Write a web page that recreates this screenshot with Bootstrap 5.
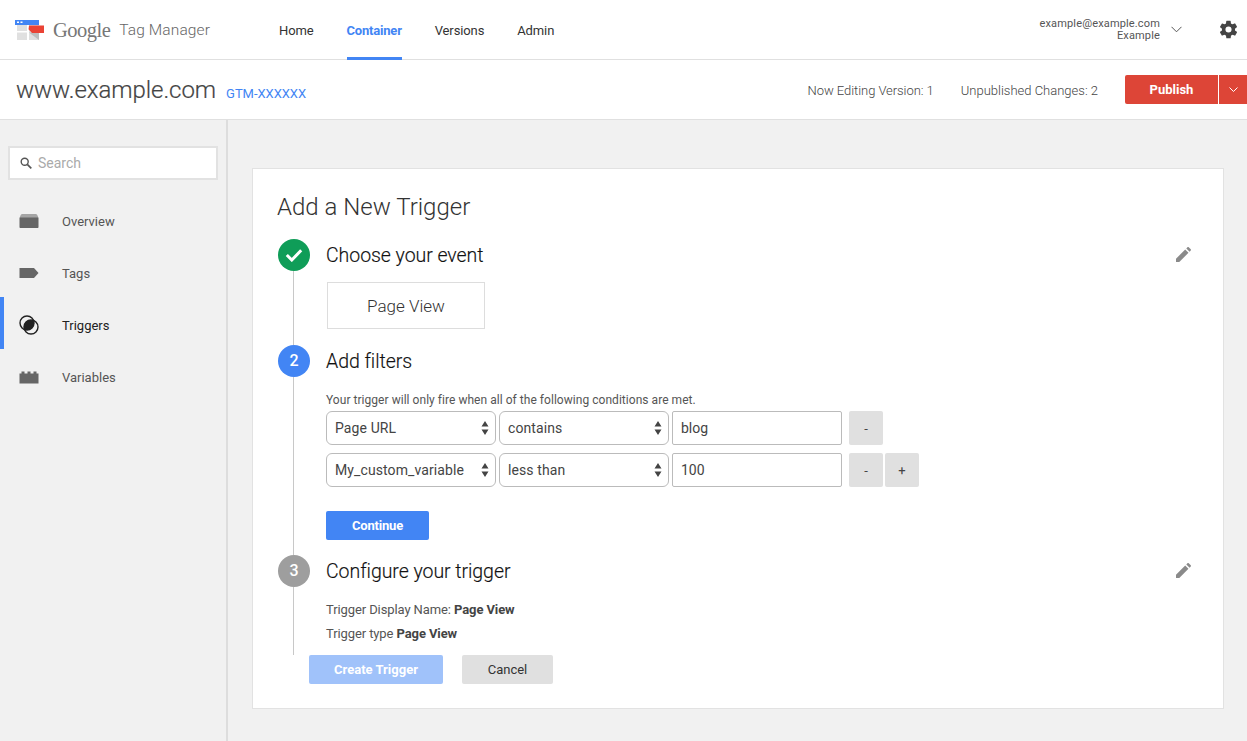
<!DOCTYPE html>
<html lang="en">
<head>
<meta charset="utf-8">
<title>Google Tag Manager</title>
<link href="https://cdn.jsdelivr.net/npm/bootstrap@5.3.0/dist/css/bootstrap.min.css" rel="stylesheet">
<style>
html,body{height:741px;overflow:hidden}
body{font-family:Roboto,"Liberation Sans",sans-serif;background:#f1f1f1;color:#444;font-size:13px}
.topbar{height:60px;background:#fff;border-bottom:1px solid #e0e0e0}
.brand{width:279px;padding-left:15px;gap:8px}
.wordmark{font-family:"Liberation Serif",serif;font-size:20.5px;color:#777;letter-spacing:-.5px;line-height:1;margin-top:2px}
.product{font-size:15.5px;font-weight:300;color:#666;margin-left:1px;letter-spacing:.1px;margin-top:2px}
.tabs{gap:33px;height:59px}
.tablink{display:flex;align-items:center;height:60px;color:#333;text-decoration:none;font-size:13px;letter-spacing:-.12px;border-bottom:3px solid transparent;padding-top:4px}
.tablink.on{color:#4285f4;font-weight:700;border-bottom-color:#4285f4;letter-spacing:-.2px}
.acct{font-size:11px;line-height:12px;color:#555;text-align:right;margin-right:10px;padding-top:1px;letter-spacing:.15px}
.acct-chev{margin-right:36px;margin-left:1px}
.gear{margin-right:8px}
.subbar{height:60px;background:#fff;border-bottom:1px solid #e0e0e0;padding-left:16px}
.site{font-size:24px;color:#444;font-weight:300;line-height:1;letter-spacing:-.05px;-webkit-text-stroke:.2px #444}
.gtm{font-size:13px;color:#4285f4;margin-left:10px;margin-top:9px;text-decoration:none;letter-spacing:-.05px}
.stat{font-size:13px;font-weight:300;color:#444;margin-right:27px;padding-top:2px}
.stat.first{letter-spacing:-.06px}
.pub-main,.pub-caret{height:29px;background:#dd4537;border:0;border-radius:0;color:#fff;font-size:13px;font-weight:700;padding:0;display:flex;align-items:center;justify-content:center}
.pub-main{width:93px;border-radius:2px 0 0 2px}
.pub-caret{width:28px;margin-left:1px}
.shell{height:621px}
.sidebar{width:228px;border-right:2px solid #ddd;padding-top:26px;flex:none}
.searchbox{margin:0 8px 13px 8px;height:34px;border:2px solid #e2e2e2;background:#fff;padding-left:10px;gap:6px;color:#aaa;font-size:14px}
.sideitem{height:52px;padding-left:19px;color:#555;font-size:13px;text-decoration:none;gap:0}
.sideitem svg{width:20px;flex:none;margin-right:23px;margin-top:4px}
.sideitem span{margin-top:6px}
.sideitem.on{color:#222;box-shadow:inset 4px 0 0 #4285f4}
.mainpane{padding:48px 23px 0 24px;flex:1}
.panel{height:541px;background:#fff;border:1px solid #e2e2e2;padding:22px 24px 0 25px;border-radius:0}
.paneltitle{font-size:24px;font-weight:300;color:#333;line-height:32px;margin:0 0 16px -1px}
.step{gap:16px}
.rail{width:32px;flex:none}
.dot{width:32px;height:32px;border-radius:50%;color:#fff;font-size:16px;font-weight:500;flex:none}
.dot.ok{background:#0f9d58}
.dot.cur{background:#4285f4}
.dot.next{background:#9e9e9e}
.stem{width:1px;background:#c8c8c8;flex:1;align-self:flex-start;margin-left:15px}
.stepbody{flex:1}
.steptitle{font-size:19.5px;font-weight:300;color:#111;line-height:32px;padding-top:1px;-webkit-text-stroke:.15px #111;letter-spacing:-.05px}
.s1{height:106px}.s2{height:210px}.s3{height:100px}
.eventbox{width:158px;height:47px;margin:10px 0 0 1px;padding-top:2px;border:1px solid #ddd;font-size:17px;font-weight:300;color:#333}
.hint{font-size:12px;line-height:14px;color:#555;margin-top:15px;margin-bottom:4px;letter-spacing:.04px}
.filter{gap:3px;margin-bottom:8px}
.fld{width:170px;height:34px;font-size:14px;color:#444;border:1px solid #bbb;border-radius:6px;padding:0 8px;box-shadow:none;font-family:inherit;letter-spacing:.1px;background-position:right 6px center;background-size:8px 14px;
background-image:url("data:image/svg+xml,%3Csvg xmlns='http://www.w3.org/2000/svg' viewBox='0 0 8 14'%3E%3Cpath fill='%23444' d='M4 0l3.5 5.500h-7zM4 14L.5 8.500h7z'/%3E%3C/svg%3E")}
.fldtext{width:170px;height:34px;font-size:14px;color:#444;border:1px solid #bbb;border-radius:2px;padding:0 8px;box-shadow:none}
.mini{width:34px;height:34px;background:#e0e0e0;border:0;border-radius:2px;padding:0;color:#444;font-size:13px;line-height:1}
.minis{gap:2px;margin-left:4px}
.go{width:103px;height:29px;background:#4285f4;color:#fff;font-weight:700;font-size:13px;letter-spacing:-.2px;border:0;border-radius:2px;padding:0;margin-top:16px}
.summary{font-size:13px;line-height:24px;color:#555;letter-spacing:-.1px}
.summary b{color:#444;font-weight:700}
.summary.lead-line{margin-top:10px}
.actions{margin-left:31px;gap:19px}
.create{width:134px;height:29px;background:#a0c2fa;color:#fff;font-weight:700;font-size:13px;border:0;border-radius:2px;padding:0}
.cancel{width:91px;height:29px;background:#e0e0e0;color:#333;font-size:13px;border:0;border-radius:2px;padding:0}
.pencil{margin:8px 8px 0 0}
</style>
</head>
<body>
<header class="topbar d-flex align-items-center">
  <div class="brand d-flex align-items-center flex-none">
    <svg width="30" height="22" viewBox="0 0 30 22" aria-hidden="true">
      <rect x="0" y="1" width="24" height="5" fill="#4285f4"/>
      <rect x="2" y="2.500" width="2" height="1.500" fill="#fff"/><rect x="5.500" y="2.500" width="2" height="1.500" fill="#fff"/>
      <rect x="2" y="6" width="22" height="15" fill="#e0e0e0"/>
      <path d="M2 12h10v1.500H2zM12 6v15h2V6z" fill="#fff"/>
      <path d="M14 13.500h10V21z" fill="#bdbdbd"/>
      <path d="M14 6.500h15V14H17l-3.500-3.800z" fill="#ea4335"/>
    </svg>
    <span class="wordmark">Google</span><span class="product">Tag Manager</span>
  </div>
  <nav class="tabs d-flex">
    <a class="tablink" href="#">Home</a>
    <a class="tablink on" href="#">Container</a>
    <a class="tablink" href="#">Versions</a>
    <a class="tablink" href="#">Admin</a>
  </nav>
  <div class="ms-auto d-flex align-items-center">
    <div class="acct">example@example.com<br>Example</div>
    <svg class="acct-chev" width="11" height="7" viewBox="0 0 11 7" aria-hidden="true"><path d="M.5.8l5 5 5-5" fill="none" stroke="#555" stroke-width="1"/></svg>
    <svg class="gear" width="21" height="21" viewBox="0 0 24 24" aria-hidden="true"><path fill="#444" d="M19.400 13c.04-.33.06-.66.06-1s-.02-.67-.06-1l2.100-1.650a.5.5 0 0 0 .12-.64l-2-3.460a.5.5 0 0 0-.6-.22l-2.500 1a7.300 7.300 0 0 0-1.700-1l-.37-2.650A.5.5 0 0 0 14 2h-4a.5.5 0 0 0-.5.42L9.100 5.070a7.600 7.600 0 0 0-1.700 1l-2.480-1a.5.5 0 0 0-.61.22l-2 3.460a.5.5 0 0 0 .12.64L4.550 11a7.900 7.900 0 0 0 0 2l-2.100 1.650a.5.5 0 0 0-.12.64l2 3.460c.12.22.38.3.6.22l2.500-1c.52.4 1.080.73 1.700 1l.37 2.650c.04.24.25.42.5.42h4c.25 0 .46-.18.5-.42l.37-2.650a7.600 7.600 0 0 0 1.700-1l2.480 1c.23.08.49 0 .61-.22l2-3.460a.5.5 0 0 0-.12-.64zM12 15.500a3.500 3.500 0 1 1 0-7 3.500 3.500 0 0 1 0 7z"/></svg>
  </div>
</header>

<div class="subbar d-flex align-items-center">
  <span class="site">www.example.com</span>
  <a class="gtm" href="#">GTM-XXXXXX</a>
  <div class="ms-auto d-flex align-items-center">
    <span class="stat first">Now Editing Version: 1</span>
    <span class="stat">Unpublished Changes: 2</span>
    <button class="btn pub-main" type="button">Publish</button>
    <button class="btn pub-caret" type="button" aria-label="More"><svg width="9" height="5" viewBox="0 0 9 5" aria-hidden="true"><path d="M.5.5l4 4 4-4" fill="none" stroke="#fff"/></svg></button>
  </div>
</div>

<div class="shell d-flex">
  <aside class="sidebar">
    <div class="searchbox d-flex align-items-center">
      <svg width="12" height="12" viewBox="0 0 12 12" aria-hidden="true"><circle cx="4.700" cy="4.700" r="3.500" fill="none" stroke="#555" stroke-width="1.400"/><path d="M7.300 7.300l4 4" stroke="#555" stroke-width="1.700"/></svg>
      <span>Search</span>
    </div>
    <a class="sideitem d-flex align-items-center" href="#">
      <svg height="16" viewBox="0 0 20 16" aria-hidden="true"><path fill="#666" d="M3.500 1h13c1 0 1.600.5 2 1.500L19.500 5H.5l1-2.500C1.900 1.500 2.500 1 3.500 1z" opacity=".55"/><path fill="#666" d="M1.500 4.500h17c.6 0 1 .4 1 1V14c0 .6-.4 1-1 1h-17c-.6 0-1-.4-1-1V5.500c0-.6.4-1 1-1z"/></svg>
      <span>Overview</span>
    </a>
    <a class="sideitem d-flex align-items-center" href="#">
      <svg height="12" viewBox="0 0 20 12" aria-hidden="true"><path fill="#666" d="M.5 1h14.500l4.500 5-4.500 5H.5z"/></svg>
      <span>Tags</span>
    </a>
    <a class="sideitem on d-flex align-items-center" href="#">
      <svg height="20" viewBox="0 0 20 20" aria-hidden="true"><circle cx="8" cy="8" r="7" fill="none" stroke="#222" stroke-width="1.400"/><circle cx="12" cy="12" r="7" fill="none" stroke="#222" stroke-width="1.400"/><path fill="#222" d="M14.530 5.470A7 7 0 0 1 5.470 14.530 7 7 0 0 1 14.530 5.470z"/></svg>
      <span>Triggers</span>
    </a>
    <a class="sideitem d-flex align-items-center" href="#">
      <svg height="13" viewBox="0 0 20 13" aria-hidden="true"><path fill="#666" d="M.5 2.500h2V.5h3v2h3V.5h3v2h3V.5h3v2h2V12.500H.5z"/></svg>
      <span>Variables</span>
    </a>
  </aside>

  <main class="mainpane">
    <section class="panel">
      <h1 class="paneltitle">Add a New Trigger</h1>

      <div class="step s1 d-flex">
        <div class="rail d-flex flex-column align-items-center">
          <div class="dot ok d-flex align-items-center justify-content-center">
            <svg width="18" height="14" viewBox="0 0 18 14" aria-hidden="true"><path d="M1.800 7l5 5L16.200 2.300" fill="none" stroke="#fff" stroke-width="3"/></svg>
          </div>
          <div class="stem"></div>
        </div>
        <div class="stepbody">
          <div class="d-flex justify-content-between">
            <div class="steptitle">Choose your event</div>
            <svg class="pencil" width="15" height="15" viewBox="0 0 16 16" aria-hidden="true"><path fill="#8a8a8a" d="M0 16v-3.500L9.800 2.700l3.500 3.500L3.500 16zM11 1.500L12.200.3c.4-.4 1-.4 1.400 0l2.100 2.100c.4.400.4 1 0 1.400L14.500 5z"/></svg>
          </div>
          <div class="eventbox d-flex align-items-center justify-content-center">Page View</div>
        </div>
      </div>

      <div class="step s2 d-flex">
        <div class="rail d-flex flex-column align-items-center">
          <div class="dot cur d-flex align-items-center justify-content-center">2</div>
          <div class="stem"></div>
        </div>
        <div class="stepbody">
          <div class="steptitle">Add filters</div>
          <div class="hint">Your trigger will only fire when all of the following conditions are met.</div>
          <div class="filter d-flex">
            <select class="form-select fld"><option>Page URL</option></select>
            <select class="form-select fld"><option>contains</option></select>
            <input class="form-control fldtext" type="text" value="blog">
            <div class="minis d-flex"><button class="btn mini" type="button">-</button></div>
          </div>
          <div class="filter d-flex">
            <select class="form-select fld"><option>My_custom_variable</option></select>
            <select class="form-select fld"><option>less than</option></select>
            <input class="form-control fldtext" type="text" value="100">
            <div class="minis d-flex"><button class="btn mini" type="button">-</button><button class="btn mini" type="button">+</button></div>
          </div>
          <button class="btn go" type="button">Continue</button>
        </div>
      </div>

      <div class="step s3 d-flex">
        <div class="rail d-flex flex-column align-items-center">
          <div class="dot next d-flex align-items-center justify-content-center">3</div>
          <div class="stem"></div>
        </div>
        <div class="stepbody">
          <div class="d-flex justify-content-between">
            <div class="steptitle">Configure your trigger</div>
            <svg class="pencil" width="15" height="15" viewBox="0 0 16 16" aria-hidden="true"><path fill="#8a8a8a" d="M0 16v-3.500L9.800 2.700l3.500 3.500L3.500 16zM11 1.500L12.200.3c.4-.4 1-.4 1.400 0l2.100 2.100c.4.400.4 1 0 1.400L14.500 5z"/></svg>
          </div>
          <div class="summary lead-line">Trigger Display Name: <b>Page View</b></div>
          <div class="summary">Trigger type <b>Page View</b></div>
        </div>
      </div>

      <div class="actions d-flex">
        <button class="btn create" type="button">Create Trigger</button>
        <button class="btn cancel" type="button">Cancel</button>
      </div>
    </section>
  </main>
</div>
<script src="https://cdn.jsdelivr.net/npm/bootstrap@5.3.0/dist/js/bootstrap.bundle.min.js"></script>
</body>
</html>
